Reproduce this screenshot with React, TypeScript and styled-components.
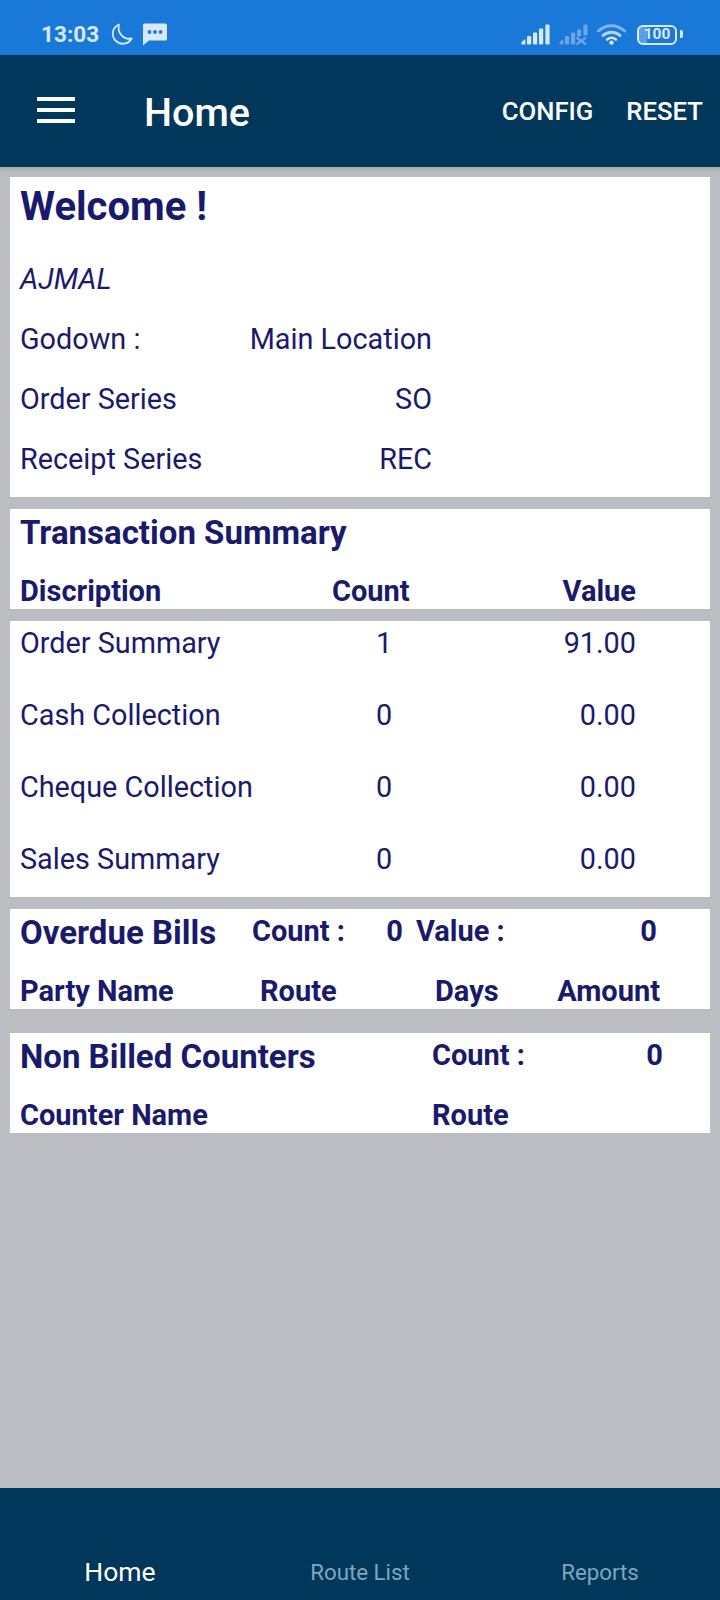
import React from "react";
import styled, { createGlobalStyle } from "styled-components";

const Global = createGlobalStyle`
  html, body { margin: 0; padding: 0; background: #bcbdc2; }
  * { box-sizing: border-box; }
  body { font-family: Roboto, "Liberation Sans", sans-serif; }
`;

const Screen = styled.div`
  width: 720px;
  height: 1600px;
  display: flex;
  flex-direction: column;
  background: #bcbdc2;
  overflow: hidden;
`;

const StatusBar = styled.div`
  height: 55px;
  flex: none;
  background: #1a78d9;
  display: flex;
  align-items: center;
  padding: 14px 37px 0 41px;
  color: #d8e9fb;
`;
const Clock = styled.span`
  font-size: 22.6px;
  font-weight: 700;
  line-height: 28px;
  margin-right: 1px;
`;
const StatusLeft = styled.div`
  display: flex;
  align-items: center;
  gap: 10px;
  flex: 1;
`;
const StatusRight = styled.div`
  display: flex;
  align-items: center;
  gap: 9px;
`;
const Battery = styled.div`
  position: relative;
  width: 40px;
  height: 20px;
  border: 2.5px solid #d8e9fb;
  border-radius: 6px;
  margin-left: 2px;
  margin-right: 6px;
  font-size: 15.5px;
  font-weight: 700;
  line-height: 15px;
  text-align: center;
  background: linear-gradient(90deg, #5c9fe6 0 8px, transparent 8px);
  &::after {
    content: "";
    position: absolute;
    right: -7.5px;
    top: 3.5px;
    width: 3px;
    height: 8px;
    border-radius: 0 2px 2px 0;
    background: #d8e9fb;
  }
`;

const Header = styled.header`
  height: 112px;
  flex: none;
  background: #01375a;
  display: flex;
  align-items: center;
  padding: 0 17px 0 37px;
  color: #fff;
  box-shadow: 0 2px 4px rgba(0, 0, 0, 0.12);
`;
const Burger = styled.div`
  width: 38px;
  display: flex;
  flex-direction: column;
  gap: 7px;
  margin-right: 69px;
  margin-top: -3px;
  & > i {
    display: block;
    height: 4px;
    background: #fff;
  }
`;
const Title = styled.h1`
  margin: 4px 0 0;
  flex: 1;
  font-size: 39.5px;
  font-weight: 500;
  line-height: 44px;
`;
const HeaderActions = styled.div`
  display: flex;
  gap: 33px;
`;
const HeaderAction = styled.span`
  font-size: 25.7px;
  font-weight: 500;
  line-height: 32px;
`;

const Main = styled.main`
  flex: 1;
  padding: 10px 10px 0;
  display: flex;
  flex-direction: column;
`;

const Card = styled.section<{ $gap?: number; $bottom?: number }>`
  background: #fff;
  color: #1a1a6c;
  padding: 0 10px ${(p) => p.$bottom ?? 0}px;
  margin-bottom: ${(p) => p.$gap ?? 12}px;
`;

const Welcome = styled.h2`
  margin: 0 0 12px;
  font-size: 40px;
  font-weight: 700;
  line-height: 60px;
`;
const InfoRow = styled.div`
  display: grid;
  grid-template-columns: 200px 212px;
  height: 60px;
  align-items: center;
  font-size: 28.8px;
`;
const UserName = styled.div`
  height: 60px;
  line-height: 60px;
  font-size: 28.8px;
  font-style: italic;
`;
const InfoValue = styled.span`
  text-align: right;
`;

const SectionTitle = styled.h3`
  margin: 0;
  font-size: 33px;
  font-weight: 700;
  line-height: 48px;
`;
const Strong = styled.span`
  font-size: 29px;
  font-weight: 700;
  line-height: 36px;
`;
const Right = styled(Strong)`
  text-align: right;
`;

const SummaryHead = styled.div`
  display: grid;
  grid-template-columns: 312px 154px 150px;
  padding: 16px 0 0;
  height: 52px;
`;
const SummaryBody = styled.div`
  display: flex;
  flex-direction: column;
  gap: 28px;
  padding-bottom: 16px;
`;
const SummaryRow = styled.div`
  display: grid;
  grid-template-columns: 314px 100px 202px;
  height: 44px;
  align-items: center;
  font-size: 28.8px;
`;
const CountCell = styled.span`
  text-align: center;
`;

const OverdueTop = styled.div`
  display: grid;
  grid-template-columns: 232px 151px 254px;
  height: 48px;
  align-items: center;
`;
const OverdueHead = styled.div`
  display: grid;
  grid-template-columns: 240px 175px 122px 103px;
  height: 52px;
  padding-top: 16px;
`;
const CounterTop = styled.div`
  display: grid;
  grid-template-columns: 412px 231px;
  height: 48px;
  align-items: center;
`;
const CounterHead = styled.div`
  display: grid;
  grid-template-columns: 412px 1fr;
  height: 52px;
  padding-top: 16px;
`;
const Pair = styled.div<{ $inset?: number }>`
  display: flex;
  justify-content: space-between;
  margin-top: -4px;
  padding-left: ${(p) => p.$inset ?? 0}px;
`;

const BottomNav = styled.nav`
  height: 112px;
  flex: none;
  background: #01375a;
  display: grid;
  grid-template-columns: repeat(3, 240px);
  padding-top: 66px;
  text-align: center;
`;
const NavItem = styled.span<{ $active?: boolean }>`
  font-size: ${(p) => (p.$active ? 26.5 : 22.3)}px;
  line-height: 36px;
  color: ${(p) => (p.$active ? "#ffffff" : "#7fa6bf")};
`;

const Moon = () => (
  <svg width="23" height="23" viewBox="0 0 23 23" fill="none" stroke="#d8e9fb" strokeWidth="1.8">
    <path d="M9 1.5 A10 10 0 1 0 21.6 15.5 A11 11 0 0 1 9 1.5 Z" strokeLinejoin="round" />
  </svg>
);
const Chat = () => (
  <svg width="24" height="23" viewBox="0 0 24 23">
    <path fill="#d8e9fb" d="M1.5 0.5 H22.5 A1.5 1.5 0 0 1 24 2 V16 A1.5 1.5 0 0 1 22.5 17.5 H6 L0 22.5 V2 A1.5 1.5 0 0 1 1.5 0.5 Z" />
    <circle cx="6.5" cy="9" r="1.9" fill="#1a78d9" />
    <circle cx="12" cy="9" r="1.9" fill="#1a78d9" />
    <circle cx="17.5" cy="9" r="1.9" fill="#1a78d9" />
  </svg>
);
const Signal = ({ faded }: { faded?: boolean }) => {
  const c = faded ? "#6ba5e6" : "#d8e9fb";
  return (
    <svg width="29" height="21" viewBox="0 0 29 21">
      <path d="M0.5 20.5 V18 L4.4 15 V20.5 Z" fill={c} />
      <rect x="6" y="12" width="4.2" height="8.5" rx="1.2" fill={c} />
      <rect x="12" y="8.5" width="4.2" height="12" rx="1.2" fill={c} />
      <rect x="18" y={faded ? 5.5 : 4.5} width="4.2" height={faded ? 7 : 16} rx="1.2" fill={c} />
      <rect x="24.4" y="0.5" width="4.2" height={faded ? 11 : 20} rx="1.2" fill={c} />
      {faded && (
        <path d="M17.5 13.5 L27 20.5 M27 13.5 L17.5 20.5" stroke={c} strokeWidth="2.2" />
      )}
    </svg>
  );
};
const Wifi = () => (
  <svg width="29" height="21" viewBox="0 0 29 21" fill="none" strokeLinecap="round">
    <path d="M1.5 7 C9 0 20 0 27.5 7" stroke="#7db6f3" strokeWidth="3" />
    <path d="M6 11.5 C11 7 18 7 23 11.5" stroke="#b6d6f8" strokeWidth="3" />
    <path d="M10.2 15.5 C12.8 13.4 16.2 13.4 18.8 15.5" stroke="#d8e9fb" strokeWidth="2.6" />
    <circle cx="14.5" cy="18.6" r="2.2" fill="#d8e9fb" />
  </svg>
);

const summaryRows = [
  ["Order Summary", "1", "91.00"],
  ["Cash Collection", "0", "0.00"],
  ["Cheque Collection", "0", "0.00"],
  ["Sales Summary", "0", "0.00"],
];

export default function App() {
  return (
    <Screen>
      <Global />
      <StatusBar>
        <StatusLeft>
          <Clock>13:03</Clock>
          <Moon />
          <Chat />
        </StatusLeft>
        <StatusRight>
          <Signal />
          <Signal faded />
          <Wifi />
          <Battery>100</Battery>
        </StatusRight>
      </StatusBar>

      <Header>
        <Burger>
          <i />
          <i />
          <i />
        </Burger>
        <Title>Home</Title>
        <HeaderActions>
          <HeaderAction>CONFIG</HeaderAction>
          <HeaderAction>RESET</HeaderAction>
        </HeaderActions>
      </Header>

      <Main>
        <Card $bottom={8}>
          <Welcome>Welcome !</Welcome>
          <UserName>AJMAL</UserName>
          <InfoRow>
            <span>Godown :</span>
            <InfoValue>Main Location</InfoValue>
          </InfoRow>
          <InfoRow>
            <span>Order Series</span>
            <InfoValue>SO</InfoValue>
          </InfoRow>
          <InfoRow>
            <span>Receipt Series</span>
            <InfoValue>REC</InfoValue>
          </InfoRow>
        </Card>

        <Card>
          <SectionTitle>Transaction Summary</SectionTitle>
          <SummaryHead>
            <Strong>Discription</Strong>
            <Strong>Count</Strong>
            <Right>Value</Right>
          </SummaryHead>
        </Card>

        <Card>
          <SummaryBody>
            {summaryRows.map(([name, count, value]) => (
              <SummaryRow key={name}>
                <span>{name}</span>
                <CountCell>{count}</CountCell>
                <InfoValue>{value}</InfoValue>
              </SummaryRow>
            ))}
          </SummaryBody>
        </Card>

        <Card $gap={24}>
          <OverdueTop>
            <SectionTitle>Overdue Bills</SectionTitle>
            <Pair>
              <Strong>Count :</Strong>
              <Strong>0</Strong>
            </Pair>
            <Pair $inset={13}>
              <Strong>Value :</Strong>
              <Strong>0</Strong>
            </Pair>
          </OverdueTop>
          <OverdueHead>
            <Strong>Party Name</Strong>
            <Strong>Route</Strong>
            <Strong>Days</Strong>
            <Right>Amount</Right>
          </OverdueHead>
        </Card>

        <Card>
          <CounterTop>
            <SectionTitle>Non Billed Counters</SectionTitle>
            <Pair>
              <Strong>Count :</Strong>
              <Strong>0</Strong>
            </Pair>
          </CounterTop>
          <CounterHead>
            <Strong>Counter Name</Strong>
            <Strong>Route</Strong>
          </CounterHead>
        </Card>
      </Main>

      <BottomNav>
        <NavItem $active>Home</NavItem>
        <NavItem>Route List</NavItem>
        <NavItem>Reports</NavItem>
      </BottomNav>
    </Screen>
  );
}
